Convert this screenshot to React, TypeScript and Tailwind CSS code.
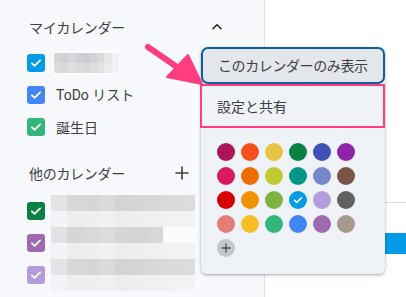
import React from "react";

const Check = ({ color }: { color: string }) => (
  <div className="w-[18px] h-[18px] rounded-[3px] flex items-center justify-center shrink-0" style={{ backgroundColor: color }}>
    <svg width="14" height="14" viewBox="0 0 24 24" fill="none" stroke="white" strokeWidth="3.2" strokeLinecap="round" strokeLinejoin="round">
      <path d="M5 12.5l4.5 4.5L19 7.5" />
    </svg>
  </div>
);

const Mosaic = ({ rows, cols, cell, grays }: { rows: number; cols: number; cell: number; grays: string[][] }) => (
  <div className="flex flex-col">
    {Array.from({ length: rows }).map((_, r) => (
      <div key={r} className="flex">
        {Array.from({ length: cols }).map((_, c) => (
          <div key={c} style={{ width: cell, height: 10, backgroundColor: grays[r][c % grays[r].length] }} />
        ))}
      </div>
    ))}
  </div>
);

const BandMosaic = ({ dark, light }: { dark: string[]; light: string[] }) => (
  <div className="flex flex-col">
    <div className="flex h-[16px]">
      {dark.map((g, i) => (
        <div key={i} style={{ width: 16, backgroundColor: g }} />
      ))}
    </div>
    <div className="flex h-[16px]">
      {light.map((g, i) => (
        <div key={i} style={{ width: 16, backgroundColor: g }} />
      ))}
    </div>
  </div>
);

const colors = [
  ["#ad1457", "#f4511e", "#e4c441", "#0b8043", "#3f51b5", "#8e24aa"],
  ["#d81b60", "#ef6c00", "#c0ca33", "#009688", "#7986cb", "#795548"],
  ["#d50000", "#f09300", "#7cb342", "#039be5", "#b39ddb", "#616161"],
  ["#e67c73", "#f6bf26", "#33b679", "#4285f4", "#9e69af", "#a79b8e"],
];

export default function App() {
  const font = { fontFamily: '"Noto Sans CJK JP", "Noto Sans", Roboto, sans-serif' };
  return (
    <div className="relative w-[406px] h-[297px] overflow-hidden bg-white flex" style={font}>
      {/* Sidebar */}
      <div className="w-[265px] h-full bg-[#f8f9fc] border-r border-[#dde1e8] flex flex-col shrink-0">
        <div className="h-[18px]" />
        <div className="flex items-center h-[18px] pl-[29px] pr-[40px] justify-between">
          <span className="text-[14px] text-[#3c4043] tracking-[-0.3px]">マイカレンダー</span>
          <svg width="14" height="14" viewBox="0 0 24 24" fill="none" stroke="#202124" strokeWidth="2.6" strokeLinecap="round" strokeLinejoin="round">
            <path d="M5 15l7-7 7 7" />
          </svg>
        </div>
        <div className="h-[11px]" />
        <div className="flex items-center h-[32px] pl-[27px] gap-[8px]">
          <Check color="#039be5" />
          <div className="bg-white px-[1px] py-[1px]">
            <Mosaic
              rows={2}
              cols={9}
              cell={7.2}
              grays={[
                ["#d4d4d6", "#cfd0d3", "#d6d7da", "#cfd0d2", "#cbcccf", "#d2d3d6", "#dadbdd", "#e6e6e8", "#f0f0f2"],
                ["#dcdcde", "#d8d9db", "#dedfe1", "#dadbdd", "#d7d8da", "#dcdde0", "#e2e3e5", "#ebebed", "#f3f3f5"],
              ]}
            />
          </div>
        </div>
        <div className="flex items-center h-[32px] pl-[27px] gap-[11px]">
          <Check color="#4285f4" />
          <span className="text-[14px] text-[#3c4043]" style={{ fontFamily: 'Roboto, "Noto Sans CJK JP", sans-serif' }}>
            ToDo リスト
          </span>
        </div>
        <div className="flex items-center h-[32px] pl-[27px] gap-[11px]">
          <Check color="#33b679" />
          <span className="text-[14px] text-[#3c4043]">誕生日</span>
        </div>
        <div className="h-[17px]" />
        <div className="flex items-center h-[26px] pl-[29px] pr-[74px] justify-between">
          <span className="text-[14px] text-[#3c4043] tracking-[-0.3px]">他のカレンダー</span>
          <svg width="16" height="16" viewBox="0 0 24 24" fill="none" stroke="#3c4043" strokeWidth="2.4" strokeLinecap="round">
            <path d="M12 3v18M3 12h18" />
          </svg>
        </div>
        <div className="h-[9px]" />
        <div className="flex flex-col">
          {["#0b8043", "#9e69af", "#b39ddb"].map((c, i) => (
            <div key={i} className="flex items-center h-[32px] pl-[27px] gap-[6px]">
              <Check color={c} />
              <BandMosaic
                dark={
                  i === 1
                    ? ["#e2e2e4", "#d6d6d8", "#d9d9db", "#dcdcde", "#d6d6d8", "#d4d4d6", "#d8d8da", "#fbfbfd", "#fbfbfd"]
                    : ["#e4e4e6", "#d8d8da", "#d6d6d8", "#dadadc", "#d4d4d6", "#d6d6d8", "#d8d8da", "#dadadc", "#dcdcde"]
                }
                light={["#f3f3f5", "#eeeef0", "#efeff1", "#f1f1f3", "#ededef", "#efeff1", "#f0f0f2", "#f2f2f4", "#f3f3f5"]}
              />
            </div>
          ))}
        </div>
      </div>

      {/* Right area */}
      <div className="flex-1 flex flex-col">
        <div className="h-[202px]" />
        <div className="h-px bg-[#dadce0]" />
        <div className="h-[30px]" />
        <div className="h-[21px] bg-[#039be5]" />
      </div>

      {/* Menu */}
      <div className="absolute left-[201px] top-[47px] w-[184px] h-[227px] bg-[#eff2f7] rounded-[6px] shadow-[0_1px_3px_rgba(0,0,0,0.35)] flex flex-col">
        <div className="h-[37px] rounded-[7px] border-2 border-[#0f5f9a] bg-[#e3e6eb] flex items-center pl-[15px] text-[14px] text-[#3c4043] tracking-[-0.4px]">
          このカレンダーのみ表示
        </div>
        <div className="h-[44px] border-2 border-[#ff3d7f] flex items-center pl-[15px] text-[14px] text-[#3c4043] -ml-[1px]">
          設定と共有
        </div>
        <div className="flex flex-col gap-[6px] pl-[16px] pt-[15px]">
          {colors.map((row, r) => (
            <div key={r} className="flex gap-[6px]">
              {row.map((c, i) => (
                <div key={i} className="w-[18px] h-[18px] rounded-full flex items-center justify-center" style={{ backgroundColor: c }}>
                  {r === 2 && i === 3 ? (
                    <svg width="12" height="12" viewBox="0 0 24 24" fill="none" stroke="white" strokeWidth="3.4" strokeLinecap="round" strokeLinejoin="round">
                      <path d="M5 12.5l4.5 4.5L19 7.5" />
                    </svg>
                  ) : null}
                </div>
              ))}
            </div>
          ))}
          <div className="w-[18px] h-[18px] rounded-full bg-[#c6c7c9] flex items-center justify-center">
            <svg width="12" height="12" viewBox="0 0 24 24" fill="none" stroke="#4d4e50" strokeWidth="2.6" strokeLinecap="round">
              <path d="M12 4v16M4 12h16" />
            </svg>
          </div>
        </div>
      </div>

      {/* Pink arrow */}
      <svg className="absolute left-0 top-0 pointer-events-none" width="406" height="297" viewBox="0 0 406 297">
        <path d="M148 47 L177 67" stroke="#ff3d7f" strokeWidth="6" strokeLinecap="round" />
        <path d="M167 77 L188 55 L202 84 Z" fill="#ff3d7f" stroke="#ff3d7f" strokeWidth="2" strokeLinejoin="round" />
      </svg>
    </div>
  );
}
